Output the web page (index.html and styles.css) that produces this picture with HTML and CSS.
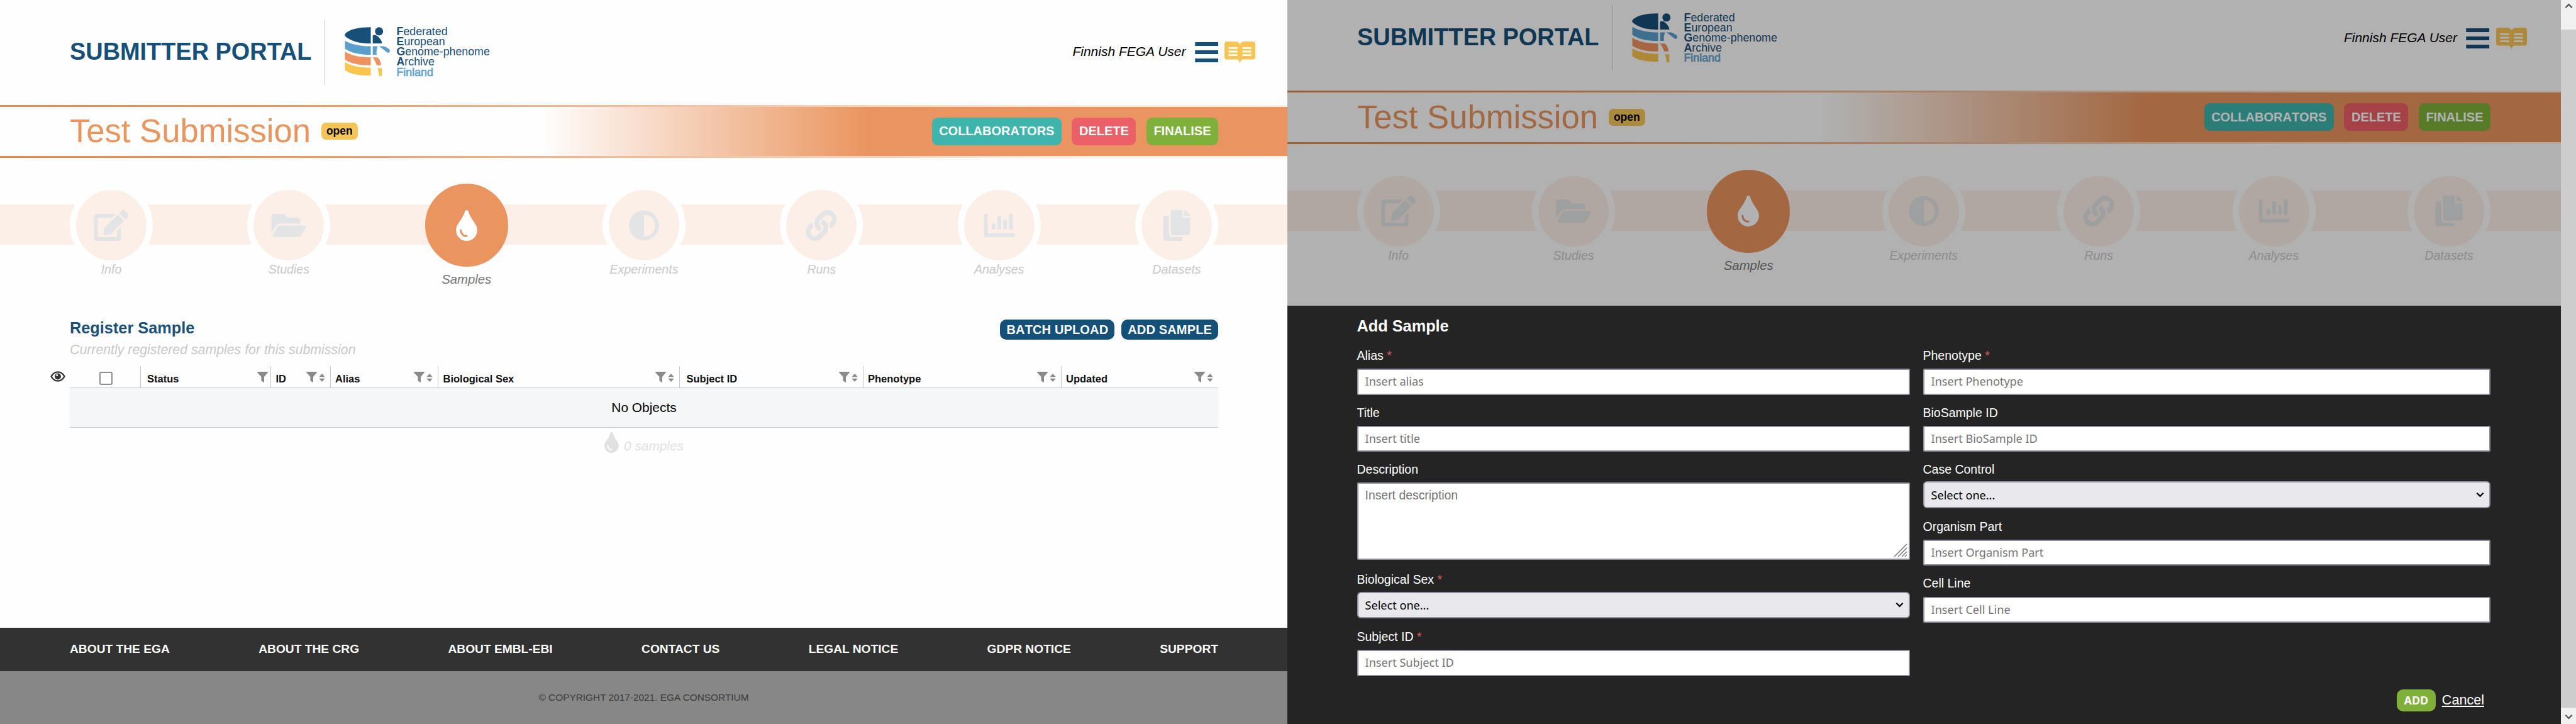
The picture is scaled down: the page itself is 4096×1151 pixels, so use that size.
FILE: index.html
```html
<!DOCTYPE html>
<html lang="en">
<head>
<meta charset="utf-8">
<title>Submitter Portal</title>
<link rel="stylesheet" href="styles.css">
</head>
<body>
<svg class="defs" aria-hidden="true">
  <symbol id="edit" viewBox="0 0 576 512"><path d="M402.6 83.2l90.2 90.2c3.8 3.8 3.8 10 0 13.8L274.4 405.6l-92.8 10.3c-12.4 1.4-22.9-9.1-21.5-21.5l10.3-92.8L388.8 83.2c3.8-3.8 10-3.8 13.8 0zm162-22.9l-48.8-48.8c-15.2-15.2-39.9-15.2-55.2 0l-35.4 35.4c-3.8 3.8-3.8 10 0 13.8l90.2 90.2c3.8 3.8 10 3.8 13.8 0l35.4-35.4c15.2-15.3 15.2-40 0-55.2zM384 346.2V448H64V128h229.8c3.2 0 6.2-1.3 8.5-3.5l40-40c7.6-7.6 2.2-20.5-8.5-20.5H48C21.5 64 0 85.5 0 112v352c0 26.5 21.5 48 48 48h352c26.5 0 48-21.5 48-48V306.2c0-10.7-12.9-16-20.5-8.5l-40 40c-2.2 2.3-3.5 5.3-3.5 8.5z"/></symbol>
  <symbol id="folder" viewBox="0 0 576 512"><path d="M572.694 292.093L500.27 416.248A63.997 63.997 0 0 1 444.989 448H45.025c-18.523 0-30.064-20.093-20.731-36.093l72.424-124.155A64 64 0 0 1 152 256h399.964c18.523 0 30.064 20.093 20.73 36.093zM152 224h328v-48c0-26.51-21.49-48-48-48H272l-64-64H48C21.49 64 0 85.49 0 112v278.046l69.077-118.418C86.214 242.25 117.989 224 152 224z"/></symbol>
  <symbol id="tint" viewBox="0 0 352 512"><path d="M205.22 22.09c-7.94-28.78-49.44-30.12-58.44 0C100.01 179.85 0 222.72 0 333.91 0 432.35 78.72 512 176 512s176-79.65 176-178.09c0-111.75-99.79-153.34-146.78-311.82zM176 448c-61.75 0-112-50.25-112-112 0-8.84 7.16-16 16-16s16 7.16 16 16c0 44.11 35.89 80 80 80 8.84 0 16 7.16 16 16s-7.16 16-16 16z"/></symbol>
  <symbol id="adjust" viewBox="0 0 512 512"><path d="M8 256c0 136.966 111.033 248 248 248s248-111.034 248-248S392.966 8 256 8 8 119.033 8 256zm248 184V72c101.705 0 184 82.311 184 184 0 101.705-82.311 184-184 184z"/></symbol>
  <symbol id="link" viewBox="0 0 512 512"><path d="M326.612 185.391c59.747 59.809 58.927 155.698.36 214.59-.11.12-.24.25-.36.37l-67.2 67.2c-59.27 59.27-155.699 59.262-214.96 0-59.27-59.26-59.27-155.7 0-214.96l37.106-37.106c9.84-9.84 26.786-3.3 27.294 10.606.648 17.722 3.826 35.527 9.69 52.721 1.986 5.822.567 12.262-3.783 16.612l-13.087 13.087c-28.026 28.026-28.905 73.66-1.155 101.96 28.024 28.579 74.086 28.749 102.325.51l67.2-67.19c28.191-28.191 28.073-73.757 0-101.83-3.701-3.694-7.429-6.564-10.341-8.569a16.037 16.037 0 0 1-6.947-12.606c-.396-10.567 3.348-21.456 11.698-29.806l21.054-21.055c5.521-5.521 14.182-6.199 20.584-1.731a152.482 152.482 0 0 1 20.522 17.197zM467.547 44.449c-59.261-59.262-155.69-59.27-214.96 0l-67.2 67.2c-.12.12-.25.25-.36.37-58.566 58.892-59.387 154.781.36 214.59a152.454 152.454 0 0 0 20.521 17.196c6.402 4.468 15.064 3.789 20.584-1.731l21.054-21.055c8.35-8.35 12.094-19.239 11.698-29.806a16.037 16.037 0 0 0-6.947-12.606c-2.912-2.005-6.64-4.875-10.341-8.569-28.073-28.073-28.191-73.639 0-101.83l67.2-67.19c28.239-28.239 74.3-28.069 102.325.51 27.75 28.3 26.872 73.934-1.155 101.96l-13.087 13.087c-4.35 4.35-5.769 10.79-3.783 16.612 5.864 17.194 9.042 34.999 9.69 52.721.509 13.906 17.454 20.446 27.294 10.606l37.106-37.106c59.271-59.259 59.271-155.699.001-214.959z"/></symbol>
  <symbol id="chart" viewBox="0 0 512 512"><path d="M332.8 320h38.4c6.4 0 12.8-6.4 12.8-12.8V172.8c0-6.4-6.4-12.8-12.8-12.8h-38.4c-6.4 0-12.8 6.4-12.8 12.8v134.4c0 6.4 6.4 12.8 12.8 12.8zm96 0h38.4c6.4 0 12.8-6.4 12.8-12.8V76.8c0-6.4-6.4-12.8-12.8-12.8h-38.4c-6.4 0-12.8 6.4-12.8 12.8v230.4c0 6.4 6.4 12.8 12.8 12.8zm-288 0h38.4c6.4 0 12.8-6.4 12.8-12.8v-70.4c0-6.4-6.4-12.8-12.8-12.8h-38.4c-6.4 0-12.8 6.4-12.8 12.8v70.4c0 6.4 6.4 12.8 12.8 12.8zm96 0h38.4c6.4 0 12.8-6.4 12.8-12.8V108.8c0-6.4-6.4-12.8-12.8-12.8h-38.4c-6.4 0-12.8 6.4-12.8 12.8v198.4c0 6.4 6.4 12.8 12.8 12.8zM496 384H64V80c0-8.84-7.16-16-16-16H16C7.16 64 0 71.16 0 80v336c0 17.67 14.33 32 32 32h464c8.84 0 16-7.16 16-16v-32c0-8.84-7.16-16-16-16z"/></symbol>
  <symbol id="copy" viewBox="0 0 448 512"><path d="M320 448v40c0 13.255-10.745 24-24 24H24c-13.255 0-24-10.745-24-24V120c0-13.255 10.745-24 24-24h72v296c0 30.879 25.121 56 56 56h168zm0-344V0H152c-13.255 0-24 10.745-24 24v368c0 13.255 10.745 24 24 24h272c13.255 0 24-10.745 24-24V128H344c-13.2 0-24-10.8-24-24zm120.971-31.029L375.029 7.029A24 24 0 0 0 358.059 0H352v96h96v-6.059a24 24 0 0 0-7.029-16.97z"/></symbol>
  <symbol id="filter" viewBox="0 0 17 17"><path d="M.5 0h16c.5 0 .6.8.3 1.2L11 8v8.2c0 .6-.5.9-1 .5L6.8 14.5a1 1 0 0 1-.4-.8V8L.2 1.2C-.1.8 0 0 .5 0z"/></symbol>
  <symbol id="sort" viewBox="0 0 10 13"><path d="M5 0l4.7 5.2H.3zM5 13L.3 7.8h9.4z"/></symbol>
  <symbol id="menu" viewBox="0 0 37 32"><path d="M0 0h37v6H0zM0 13h37v6H0zM0 26h37v6H0z"/></symbol>
  <symbol id="book" viewBox="0 0 49 35"><path fill-rule="evenodd" d="M4 0h14c3 0 5 1.5 6.5 4.5C26 1.5 28 0 31 0h14a4 4 0 0 1 4 4v20.500a4 4 0 0 1-4 4H30c-3 0-4.500 1.500-5.500 6.500-1-5-2.500-6.500-5.500-6.500H4a4 4 0 0 1-4-4V4a4 4 0 0 1 4-4zM6.500 9v2.800h14V9zM28.500 9v2.800h14V9zM6.500 14.600v2.800h14v-2.800zM28.500 14.600v2.800h14v-2.800zM6.500 20.200v2.800h14v-2.800zM28.500 20.200v2.800h14v-2.800z"/></symbol>
  <symbol id="emblem" viewBox="118 90 302 326">
    <g fill="#164f78"><path d="M291 91v108c-75 0-130-14-171-50v-14c30-32 95-44 171-44z"/><circle cx="346" cy="118" r="27"/><path d="M304 198v-52c10-8 22-6 34 6 16 12 26 30 28 46z"/></g>
    <g fill="#5b9fcc"><path d="M120 180c40 24 100 37 171 37v56c-75 0-130-12-171-40z"/><path d="M304 217h34c-8 16-10 30-8 56h-26zM345 217h32c14 4 30 14 40 22v14c-4 8-10 8-18 4-18-12-34-28-54-40z"/></g>
    <g fill="#ee935f"><path d="M120 252c40 26 100 38 171 38v53c-75 0-130-10-171-38z"/><path d="M304 290h30c12 6 24 26 26 53h-30c-4-20-16-36-26-53z"/></g>
    <g fill="#f8c54f"><path d="M120 322c40 26 100 37 171 37v52c-75 0-130-8-171-36z"/><path d="M336 361h29v53h-18c-2-20-6-36-11-53z"/></g>
  </symbol>
  <symbol id="eye" viewBox="0 0 24 17"><path fill="none" stroke="#333" stroke-width="2.4" d="M1.500 8.500C4 4 7.500 1.400 12 1.400S20 4 22.500 8.500C20 13 16.500 15.600 12 15.600S4 13 1.500 8.500z"/><circle cx="12" cy="8.5" r="4.9" fill="#333"/><circle cx="10.6" cy="6.6" r="1.5" fill="#fff"/></symbol>
  <symbol id="chev" viewBox="0 0 14 9"><path fill="none" stroke="currentColor" stroke-width="2.4" d="M1.500 1.500L7 7l5.500-5.500"/></symbol>
</svg>

<div class="screen">
  <section class="pane">
    <header class="header">
      <h1 class="brand">SUBMITTER PORTAL</h1>
      <div class="logo"><svg class="emblem"><use href="#emblem"/></svg>
        <div class="logo-text"><div><b>F</b>ederated</div><div><b>E</b>uropean</div><div><b>G</b>enome-phenome</div><div><b>A</b>rchive</div><div class="country">Finland</div></div></div>
      <div class="user"><span class="user-name">Finnish FEGA User</span><svg class="menu"><use href="#menu"/></svg><svg class="book"><use href="#book"/></svg></div>
    </header>
    <div class="titlebar">
      <h2 class="title">Test Submission</h2><span class="badge">open</span>
      <div class="actions"><button class="btn teal">COLLABORATORS</button><button class="btn red">DELETE</button><button class="btn green">FINALISE</button></div>
    </div>
    <nav class="steps">
      <div class="step"><span class="dot"><svg><use href="#edit"/></svg></span><span class="step-name">Info</span></div>
      <div class="step"><span class="dot"><svg><use href="#folder"/></svg></span><span class="step-name">Studies</span></div>
      <div class="step active"><span class="dot"><svg><use href="#tint"/></svg></span><span class="step-name">Samples</span></div>
      <div class="step"><span class="dot"><svg><use href="#adjust"/></svg></span><span class="step-name">Experiments</span></div>
      <div class="step"><span class="dot"><svg><use href="#link"/></svg></span><span class="step-name">Runs</span></div>
      <div class="step"><span class="dot"><svg><use href="#chart"/></svg></span><span class="step-name">Analyses</span></div>
      <div class="step"><span class="dot"><svg><use href="#copy"/></svg></span><span class="step-name">Datasets</span></div>
    </nav>
    <main class="content">
      <div class="content-head">
        <div><h3 class="section-title">Register Sample</h3><p class="hint">Currently registered samples for this submission</p></div>
        <div class="content-actions"><button class="btn navy">BATCH UPLOAD</button><button class="btn navy">ADD SAMPLE</button></div>
      </div>
      <div class="table-row">
        <svg class="eye"><use href="#eye"/></svg>
        <div class="table">
          <div class="thead">
            <div class="th check"><span class="checkbox"></span></div>
            <div class="th far only-filter"><span>Status</span><svg class="filter"><use href="#filter"/></svg></div>
            <div class="th"><span>ID</span><svg class="filter"><use href="#filter"/></svg><svg class="sort"><use href="#sort"/></svg></div>
            <div class="th"><span>Alias</span><svg class="filter"><use href="#filter"/></svg><svg class="sort"><use href="#sort"/></svg></div>
            <div class="th"><span>Biological Sex</span><svg class="filter"><use href="#filter"/></svg><svg class="sort"><use href="#sort"/></svg></div>
            <div class="th far"><span>Subject ID</span><svg class="filter"><use href="#filter"/></svg><svg class="sort"><use href="#sort"/></svg></div>
            <div class="th"><span>Phenotype</span><svg class="filter"><use href="#filter"/></svg><svg class="sort"><use href="#sort"/></svg></div>
            <div class="th"><span>Updated</span><svg class="filter"><use href="#filter"/></svg><svg class="sort"><use href="#sort"/></svg></div>
          </div>
          <div class="empty">No Objects</div>
          <div class="count"><svg><use href="#tint"/></svg><span>0 samples</span></div>
        </div>
      </div>
    </main>
    <footer class="footer">
      <div class="links"><span>ABOUT THE EGA</span><span>ABOUT THE CRG</span><span>ABOUT EMBL-EBI</span><span>CONTACT US</span><span>LEGAL NOTICE</span><span>GDPR NOTICE</span><span>SUPPORT</span></div>
      <div class="copyright">© COPYRIGHT 2017-2021. EGA CONSORTIUM</div>
    </footer>
  </section>

  <section class="pane dialog-pane">
    <div class="backdrop-page">
      <header class="header">
        <h1 class="brand">SUBMITTER PORTAL</h1>
        <div class="logo"><svg class="emblem"><use href="#emblem"/></svg>
          <div class="logo-text"><div><b>F</b>ederated</div><div><b>E</b>uropean</div><div><b>G</b>enome-phenome</div><div><b>A</b>rchive</div><div class="country">Finland</div></div></div>
        <div class="user"><span class="user-name">Finnish FEGA User</span><svg class="menu"><use href="#menu"/></svg><svg class="book"><use href="#book"/></svg></div>
      </header>
      <div class="titlebar">
        <h2 class="title">Test Submission</h2><span class="badge">open</span>
        <div class="actions"><button class="btn teal">COLLABORATORS</button><button class="btn red">DELETE</button><button class="btn green">FINALISE</button></div>
      </div>
      <nav class="steps">
        <div class="step"><span class="dot"><svg><use href="#edit"/></svg></span><span class="step-name">Info</span></div>
        <div class="step"><span class="dot"><svg><use href="#folder"/></svg></span><span class="step-name">Studies</span></div>
        <div class="step active"><span class="dot"><svg><use href="#tint"/></svg></span><span class="step-name">Samples</span></div>
        <div class="step"><span class="dot"><svg><use href="#adjust"/></svg></span><span class="step-name">Experiments</span></div>
        <div class="step"><span class="dot"><svg><use href="#link"/></svg></span><span class="step-name">Runs</span></div>
        <div class="step"><span class="dot"><svg><use href="#chart"/></svg></span><span class="step-name">Analyses</span></div>
        <div class="step"><span class="dot"><svg><use href="#copy"/></svg></span><span class="step-name">Datasets</span></div>
      </nav>
      <div class="shade"></div>
    </div>
    <div class="dialog">
      <h3 class="dialog-title">Add Sample</h3>
      <div class="form">
        <div class="form-col">
          <div class="field"><span class="label">Alias <i>*</i></span><div class="input">Insert alias</div></div>
          <div class="field"><span class="label">Title</span><div class="input">Insert title</div></div>
          <div class="field tall"><span class="label">Description</span><div class="input area"><span>Insert description</span><svg class="grip" viewBox="0 0 22 22"><path d="M1 21L21 1M7 21L21 7M13 21l8-8M18 21l3-3"/></svg></div></div>
          <div class="field"><span class="label">Biological Sex <i>*</i></span><div class="input select"><span>Select one...</span><svg><use href="#chev"/></svg></div></div>
          <div class="field"><span class="label">Subject ID <i>*</i></span><div class="input">Insert Subject ID</div></div>
        </div>
        <div class="form-col">
          <div class="field"><span class="label">Phenotype <i>*</i></span><div class="input">Insert Phenotype</div></div>
          <div class="field"><span class="label">BioSample ID</span><div class="input">Insert BioSample ID</div></div>
          <div class="field"><span class="label">Case Control</span><div class="input select"><span>Select one...</span><svg><use href="#chev"/></svg></div></div>
          <div class="field"><span class="label">Organism Part</span><div class="input">Insert Organism Part</div></div>
          <div class="field"><span class="label">Cell Line</span><div class="input">Insert Cell Line</div></div>
        </div>
      </div>
      <div class="dialog-actions"><button class="btn green add">ADD</button><a class="cancel">Cancel</a></div>
    </div>
  </section>
  <div class="scrollbar"><svg class="up"><use href="#chev"/></svg><div class="thumb"></div><svg><use href="#chev"/></svg></div>
</div>
</body>
</html>
```
FILE: styles.css
```css
* { box-sizing: border-box; }
body { margin: 0; font-family: "Liberation Sans", Arial, sans-serif; color: #000; background: #fefefe; }
h1, h2, h3, p { margin: 0; }
svg { display: block; fill: currentColor; }
.defs { position: absolute; width: 0; height: 0; }
.screen { display: flex; width: 4096px; height: 1151px; overflow: hidden; }
.pane { width: 2047px; height: 1151px; display: flex; flex-direction: column; background: #fefefe; overflow: hidden; flex: none; }

.header { display: flex; align-items: flex-start; height: 166.5px; padding: 30.5px 51px 0 111px; flex: none; }
.brand { font-size: 37.9px; line-height: 103px; height: 104px; color: #164f78; width: 406px; border-right: 1.5px solid #c9cdd1; white-space: nowrap; }
.logo { display: flex; margin: 12.5px 0 0 31px; color: #1c4f76; }
.emblem { width: 72.5px; height: 78.5px; }
.logo-text { margin: -1px 0 0 10px; font-size: 17.8px; line-height: 16.15px; white-space: nowrap; }
.country { color: #65a3cc; -webkit-text-stroke: .7px #65a3cc; }
.user { display: flex; align-items: flex-start; margin-left: auto; padding-top: 35.5px; }
.user-name { font-style: italic; font-size: 21px; line-height: 32px; margin-right: 14px; }
.menu { width: 37.5px; height: 32px; color: #164f78; margin: 1px 10px 0 0; }
.book { width: 49px; height: 35px; color: #f6c555; }

.titlebar { display: flex; align-items: center; height: 84.5px; padding: 0 110px 0 111px; flex: none; border: solid; border-width: 3px 0;
  border-image: linear-gradient(90deg, #e08b55 0%, #e9955f 20%, #fdece0 85%, #fef0e6 100%) 3;
  background: linear-gradient(90deg, #fefefe 42%, #ea955f 67.5%); }
.title { font-size: 52.6px; font-weight: 400; color: #e9955f; line-height: 77px; padding-bottom: 2px; }
.badge { margin-left: 17px; height: 27px; line-height: 26px; padding: 0 8px; border-radius: 7px; background: #f4c65a; font-weight: 700; font-size: 17.5px; }
.actions { display: flex; gap: 16.5px; margin-left: auto; }
.btn { font: 700 20px/43px "Liberation Sans", Arial, sans-serif; font-kerning: none; color: #fff; border: 0; height: 44px; padding: 0 11.5px; border-radius: 9px; white-space: nowrap; }
.teal { background: #3eb5ac; }
.red { background: #eb5f66; }
.green { background: #7eb03a; }
.navy { background: #155078; height: 32px; line-height: 32px; border-radius: 10px; padding: 0 10px; letter-spacing: .15px; }

.steps { display: flex; justify-content: space-between; height: 221.5px; padding: 41px 110px 0 111px; flex: none;
  background: linear-gradient(#fcefe8, #fcefe8) 0 74px / 100% 64px no-repeat; }
.step { width: 132px; display: flex; flex-direction: column; align-items: center; color: #e3e4e5; }
.dot { width: 132px; height: 132px; border-radius: 50%; border: 10.5px solid #fefefe; background: #fcefe8; display: flex; align-items: center; justify-content: center; flex: none; }
.dot svg { width: 56px; height: 49px; }
.step-name { font-style: italic; font-size: 19.6px; line-height: 22px; margin-top: -7px; color: #c9c9c9; }
.active .dot { background: #ea955f; border-color: #ea955f; color: #fff; }
.active .step-name { color: #777; font-size: 20.3px; margin-top: 9px; }

.content { flex: 1; padding: 34px 110px 0 80px; }
.content-head { display: flex; justify-content: space-between; padding-left: 31px; height: 75px; }
.section-title { font-size: 25.3px; line-height: 28px; padding-bottom: 2px; color: #1b5078; }
.hint { font-size: 21.3px; font-style: italic; line-height: 30px; margin-top: 4px; color: #c9c9c9; }
.content-actions { display: flex; gap: 11px; padding-top: 1.5px; }
.table-row { display: flex; }
.eye { width: 24px; height: 17px; margin: 8.5px 7px 0 0; }
.table { flex: 1; }
.thead { display: grid; grid-template-columns: 112.5px 207.5px 94.5px 171.5px 384px 291.5px 315px 1fr; height: 35px; border-bottom: 1.5px solid #c8c8c8; }
.th { display: flex; align-items: flex-start; padding: 9px 8px 0 7.5px; border-right: 1.5px solid #c8c8c8; font-weight: 700; font-size: 16.5px; color: #111; }
.th:last-child { border-right: 0; }
.th span { line-height: 24px; flex: 1; white-space: nowrap; margin-top: -1px; }
.th.far { padding-left: 10.5px; }
.th.only-filter { padding-right: 4px; }
.filter { width: 17px; height: 17px; color: #8a8a8a; margin-top: .5px; }
.sort { width: 10px; height: 13px; color: #8a8a8a; margin: 3px 0 0 3px; }
.th.check { justify-content: center; padding: 9.5px 0 0 4px; }
.th .checkbox { flex: none; width: 21px; height: 21px; border: 2px solid #8f8f8f; border-radius: 3px; margin: 0; background: #fff; }
.empty { height: 63.5px; line-height: 61px; text-align: center; font-size: 20.9px; background: #f4f6f8; border-bottom: 1.5px solid #c8c8c8; }
.count { display: flex; justify-content: center; gap: 8px; color: #e1e1e1; font-style: italic; font-size: 20.8px; padding-top: 7px; }
.count svg { width: 23px; height: 33px; }
.count span { line-height: 24px; margin-top: 10px; }

.footer { flex: none; height: 153.3px; background: #878787; }
.links { display: flex; justify-content: space-between; align-items: center; height: 69.3px; padding: 0 110px 0 111px; background: #323232; color: #fff; font-size: 19.2px; font-weight: 700; }
.copyright { text-align: center; font-size: 15.4px; line-height: 84px; color: #3a3a3a; }

.dialog-pane { width: 2025px; }
.backdrop-page { position: relative; height: 485.5px; overflow: hidden; flex: none; }
.backdrop-page .header { margin-top: -22.3px; padding-right: 54.5px; }
.backdrop-page .titlebar { padding-right: 112px; }
.backdrop-page .steps { padding-right: 112px; padding-left: 110.5px; }
.shade { position: absolute; inset: 0; background: rgba(0, 0, 0, .3); }
.dialog { flex: 1; background: #242424; color: #fff; padding: 17px 112px 0 110.5px; display: flex; flex-direction: column; }
.dialog-title { font-size: 25.3px; line-height: 31px; height: 47px; }
.form { display: grid; grid-template-columns: 879px 902px; gap: 21px; height: 546px; }
.field { height: 90.6px; padding-top: 3px; display: flex; flex-direction: column; }
.field.tall { height: 175.3px; }
.label { font-size: 19.5px; line-height: 24px; margin-top: .5px; height: 33.2px; }
.label i { font-style: normal; color: #d85a63; }
.input { height: 41.5px; border: 2px solid #8f8f9d; border-radius: 2px; background: #fff; color: #757575; font-family: "Noto Sans", sans-serif; font-size: 18.1px; line-height: 36px; padding: 0 11px; }
.area { height: 122.5px; display: flex; justify-content: space-between; padding-right: 2px; font-family: "Liberation Sans", Arial, sans-serif; font-size: 19.4px; }
.grip { width: 22px; height: 22px; align-self: flex-end; margin-bottom: 2px; fill: none; stroke: #777; stroke-width: 1.5; }
.select { margin-top: -2px; height: 42.5px; flex: none; border-radius: 6px; background: #e9e9ed; color: #000; display: flex; justify-content: space-between; align-items: center; padding-right: 8px; }
.select svg { width: 13px; height: 9px; }
.dialog-actions { display: flex; justify-content: flex-end; align-items: center; gap: 10px; padding-right: 10px; height: 35px; }
.add { height: 35px; line-height: 35px; font-family: "Noto Sans", sans-serif; font-size: 18px; border-radius: 10px; }
.cancel { font-size: 21.6px; text-decoration: underline; }

.scrollbar { width: 24px; display: flex; flex-direction: column; align-items: center; background: #f0f0f0; color: #555; padding: 5px 0 7px; }
.scrollbar svg { width: 13px; height: 9px; flex: none; }
.scrollbar .up { transform: scaleY(-1); }
.thumb { flex: 1; width: 24px; margin: 33px 0 10px; background: #cdcdcd; }
```
